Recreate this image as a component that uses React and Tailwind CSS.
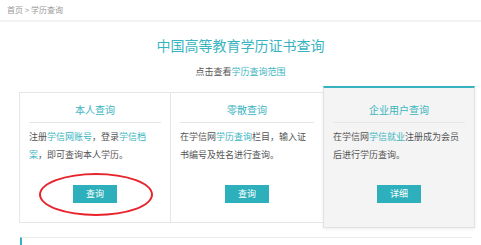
import React from 'react';

const cards = [
  {
    title: '本人查询',
    lines: [
      <>注册<span className="text-[#3bb4c1]">学信网账号</span>，登录<span className="text-[#3bb4c1]">学信档</span></>,
      <><span className="text-[#3bb4c1]">案</span>，即可查询本人学历。</>,
    ],
    button: '查询',
  },
  {
    title: '零散查询',
    lines: [
      <>在学信网<span className="text-[#3bb4c1]">学历查询</span>栏目，输入证</>,
      <>书编号及姓名进行查询。</>,
    ],
    button: '查询',
  },
];

const CardBody = ({ card }) => (
  <>
    <div className="text-center text-[10px] leading-[16px] text-[#3bb4c1]">{card.title}</div>
    <div className="mt-[4px] h-px bg-[#e6e6e6]" />
    <div className="mt-[5px] text-[9px] leading-[18px] text-[#555] whitespace-nowrap">
      {card.lines.map((line, i) => (
        <div key={i}>{line}</div>
      ))}
    </div>
    <div className="mt-[21px] flex justify-center">
      <div className="w-[44px] h-[18px] bg-[#2db0bc] text-white text-[9px] flex items-center justify-center">
        {card.button}
      </div>
    </div>
  </>
);

export default function App() {
  return (
    <div
      className="w-[481px] h-[245px] bg-white overflow-hidden relative"
      style={{ fontFamily: '"Noto Sans CJK SC", "Noto Sans", sans-serif' }}
    >
      {/* Breadcrumb */}
      <div className="h-[20px] pl-[7px] flex items-center text-[8px] text-[#999]">
        首页 &gt; 学历查询
      </div>
      <div className="h-[2px] bg-[#f3f3f3]" />

      {/* Heading */}
      <div className="mt-[13px] text-center text-[14px] leading-[20px] text-[#3ab4c1]">
        中国高等教育学历证书查询
      </div>
      <div className="mt-[10px] text-center text-[9px] leading-[14px] text-[#555]">
        点击查看<span className="text-[#3bb4c1]">学历查询范围</span>
      </div>

      {/* Cards */}
      <div className="mt-[13px] ml-[19px] w-[456px] flex items-start">
        <div className="relative w-[152px] h-[131px] border border-[#e6e6e6] px-[9px] pt-[9px]">
          <CardBody card={cards[0]} />
          <div className="absolute left-[19px] top-[80px] w-[114px] h-[43px] rounded-[50%] border-2 border-[#e8232b]" />
        </div>
        <div className="w-[152px] h-[131px] border-y border-[#e6e6e6] px-[9px] pt-[9px]">
          <CardBody card={cards[1]} />
        </div>
        <div className="w-[152px] h-[142px] -mt-[6px] bg-[#f4f4f4] border border-[#e2e2e2] border-t-2 border-t-[#35b2bf] shadow-[0_1px_3px_rgba(0,0,0,0.08)] px-[9px] pt-[14px]">
          <CardBody
            card={{
              title: '企业用户查询',
              lines: [
                <>在学信网<span className="text-[#3bb4c1]">学信就业</span>注册成为会员</>,
                <>后进行学历查询。</>,
              ],
              button: '详细',
            }}
          />
        </div>
      </div>

      {/* Next section */}
      <div className="mt-[9px] ml-[20px] w-[452px] h-[20px] border-t border-[#ebebeb] border-l-2 border-l-[#35b2bf]" />
    </div>
  );
}
